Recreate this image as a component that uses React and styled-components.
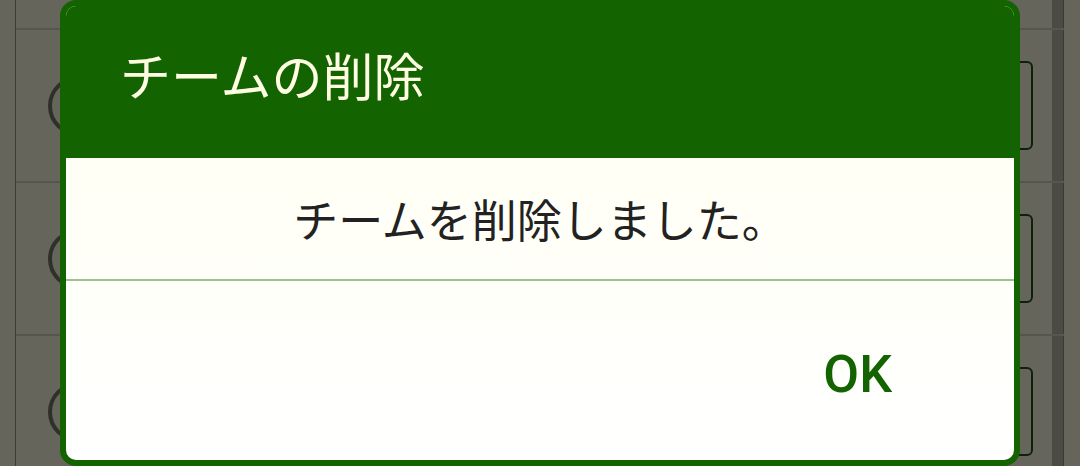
import React from 'react';
import styled, { createGlobalStyle } from 'styled-components';

const GlobalStyle = createGlobalStyle`
    html, body {
        margin: 0;
        padding: 0;
        background: #66655c;
        overflow: hidden;
    }
`

const Screen = styled.div`
    position: relative;
    width: 1080px;
    height: 466px;
    overflow: hidden;
    display: flex;
    background: #66655c;
    font-family: Roboto, "Noto Sans CJK JP", sans-serif;
`

const Gutter = styled.div`
    width: 15px;
    border-right: 1px solid #3d3c36;
    flex-shrink: 0;
`

const List = styled.div`
    width: 1048px;
    display: flex;
    flex-direction: column;
`

const Row = styled.div`
    height: ${props => props.top ? '28px' : '151px'};
    border-bottom: 2px solid #56554e;
    display: flex;
    align-items: center;
    flex-shrink: 0;
`

const Radio = styled.span`
    width: 52px;
    height: 52px;
    border: 4px solid #2f2f2b;
    border-radius: 50%;
    margin-left: 32px;
`

const Spacer = styled.span`
    flex: 1;
`

const ActionBox = styled.span`
    width: 110px;
    height: 85px;
    border: 2px solid #0f2109;
    border-radius: 6px;
    margin-right: 19px;
`

const Strip = styled.span`
    align-self: stretch;
    width: 11px;
    background: #4b4a43;
    border-right: 1px solid #3a3934;
`

const Dialog = styled.div`
    position: absolute;
    left: 60px;
    top: 0;
    width: 960px;
    height: 466px;
    box-sizing: border-box;
    border: 6px solid #136300;
    border-radius: 16px;
    overflow: hidden;
    display: flex;
    flex-direction: column;
    background: linear-gradient(#fffff0, #ffffff);
`

const Header = styled.div`
    height: 152px;
    box-sizing: border-box;
    background: #136300;
    display: flex;
    align-items: center;
    padding: 0 0 16px 54px;
    flex-shrink: 0;
`

const Title = styled.h1`
    margin: 0;
    font-family: "Noto Sans CJK JP", sans-serif;
    font-weight: 400;
    font-size: 51px;
    color: #fffde2;
`

const Message = styled.div`
    height: 121px;
    display: flex;
    align-items: center;
    justify-content: center;
    border-bottom: 2px solid #9fc08f;
    font-family: "Noto Sans CJK JP", sans-serif;
    font-size: 45px;
    color: #222222;
    flex-shrink: 0;
`

const Buttons = styled.div`
    flex: 1;
    display: flex;
    justify-content: flex-end;
    align-items: center;
    padding: 8px 122px 0 0;
`

const OkButton = styled.button`
    border: none;
    background: transparent;
    padding: 0;
    font-family: Roboto, sans-serif;
    font-weight: 500;
    font-size: 52px;
    color: #136300;
`

const rows = [1, 2, 3]

function App() {
    return (
        <Screen>
            <GlobalStyle />
            <Gutter />
            <List>
                <Row top><Spacer /><Strip /></Row>
                {rows.map(r => (
                    <Row key={r}>
                        <Radio />
                        <Spacer />
                        <ActionBox />
                        <Strip />
                    </Row>
                ))}
            </List>
            <Dialog>
                <Header>
                    <Title>チームの削除</Title>
                </Header>
                <Message>チームを削除しました。</Message>
                <Buttons>
                    <OkButton>OK</OkButton>
                </Buttons>
            </Dialog>
        </Screen>
    )
}

export default App;
